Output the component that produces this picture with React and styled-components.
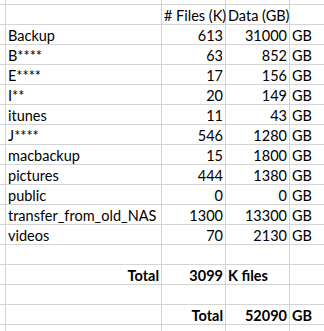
import React from "react";
import styled, { createGlobalStyle } from "styled-components";

const GlobalStyle = createGlobalStyle`
  html, body {
    margin: 0;
    padding: 0;
    background: #ffffff;
    overflow: hidden;
  }
`;

const Viewport = styled.div`
  width: 100vw;
  height: 100vh;
  overflow: hidden;
`;

const Sheet = styled.div`
  display: grid;
  grid-template-columns: 6px 156px 64px 64px 64px;
  grid-template-rows: 5px;
  grid-auto-rows: 20px;
  font-family: Lato, "Liberation Sans", Arial, sans-serif;
  font-size: 14.5px;
  color: #000000;
`;

const Cell = styled.div`
  box-sizing: border-box;
  border-right: 1px solid #d4d4d4;
  border-bottom: 1px solid #d4d4d4;
  padding: 1px 2px 0 2px;
  line-height: 19px;
  white-space: nowrap;
  text-align: ${(p) => p.$align || "left"};
  font-weight: ${(p) => (p.$bold ? 700 : 400)};
`;

const rows = [
  ["Backup", "613", "31000", "GB"],
  ["B****", "63", "852", "GB"],
  ["E****", "17", "156", "GB"],
  ["I**", "20", "149", "GB"],
  ["itunes", "11", "43", "GB"],
  ["J****", "546", "1280", "GB"],
  ["macbackup", "15", "1800", "GB"],
  ["pictures", "444", "1380", "GB"],
  ["public", "0", "0", "GB"],
  ["transfer_from_old_NAS", "1300", "13300", "GB"],
  ["videos", "70", "2130", "GB"],
];

const SheetRow = ({ cells = ["", "", "", ""], aligns = [], bold = [] }) => (
  <>
    <Cell />
    {cells.map((text, i) => (
      <Cell key={i} $align={aligns[i]} $bold={bold[i]}>
        {text}
      </Cell>
    ))}
  </>
);

const App = () => {
  return (
    <>
      <GlobalStyle />
      <Viewport>
        <Sheet>
          <SheetRow />
          <SheetRow cells={["", "# Files (K)", "Data (GB)", ""]} />
          {rows.map((r) => (
            <SheetRow key={r[0]} cells={r} aligns={["left", "right", "right", "left"]} />
          ))}
          <SheetRow />
          <SheetRow
            cells={["Total", "3099", "K files", ""]}
            aligns={["right", "right", "left", "left"]}
            bold={[true, true, true, false]}
          />
          <SheetRow />
          <SheetRow
            cells={["", "Total", "52090", "GB"]}
            aligns={["left", "right", "right", "left"]}
            bold={[false, true, true, true]}
          />
          <SheetRow />
        </Sheet>
      </Viewport>
    </>
  );
};

export default App;
